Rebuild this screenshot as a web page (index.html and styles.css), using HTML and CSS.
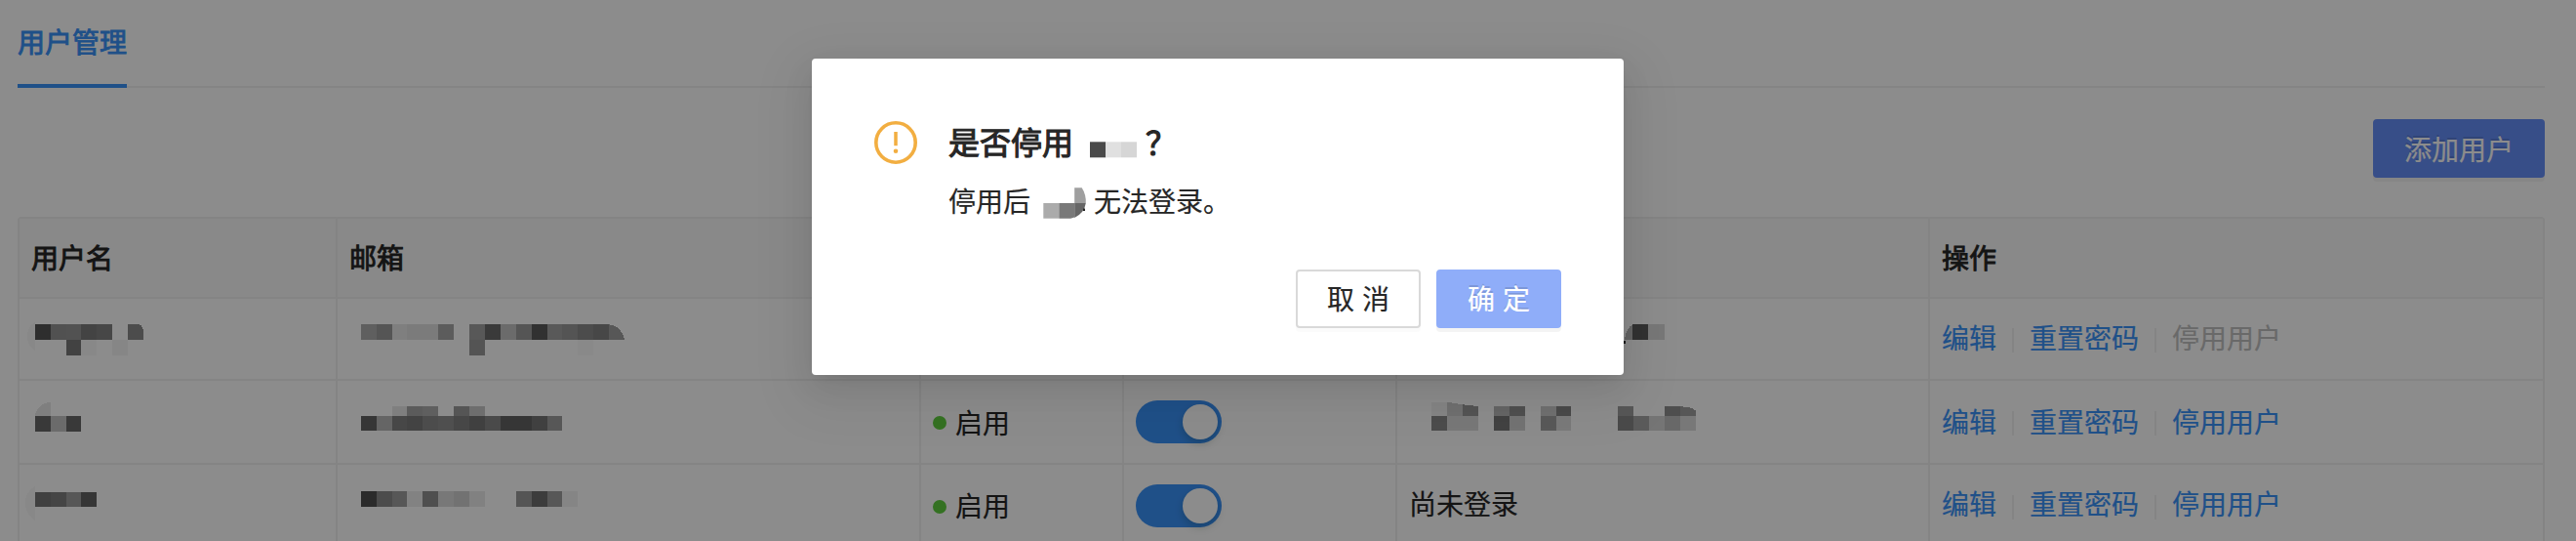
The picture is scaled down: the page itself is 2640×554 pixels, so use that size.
FILE: index.html
```
<!DOCTYPE html>
<html lang="zh-CN">
<head>
<meta charset="utf-8">
<title>用户管理</title>
<link rel="stylesheet" href="styles.css">
</head>
<body>
<main class="page">
  <nav class="tabs"><a class="tab">用户管理</a></nav>
  <div class="toolbar"><button class="btn btn-primary">添加用户</button></div>
  <section class="table">
    <div class="row head">
      <div class="cell">用户名</div><div class="cell">邮箱</div><div class="cell"></div><div class="cell"></div><div class="cell"></div><div class="cell">操作</div>
    </div>
    <div class="row first">
      <div class="cell mosaic"><svg viewBox="20 306 324 82" width="324" height="82">
        <path d="M35.7 330Q28 334 28 344.500Q28 354 35.700 359z" opacity=".03"/>
        <g transform="translate(35.7 332) scale(15.93 15.9)"><rect width="1" height="1" opacity=".67"/><rect x="1" width="1" height="1" opacity=".42"/><rect x="2" width="1" height="1" opacity=".41"/><rect x="3" width="1" height="1" opacity=".52"/><rect x="4" width="1" height="1" opacity=".49"/><path d="M6 0h.7Q7 .15 7 .6V1H6z" opacity=".46"/><rect x="2" y="1" width="1" height="1" opacity=".53"/><rect x="3" y="1" width="1" height="1" opacity=".03"/><rect x="5" y="1" width="1" height="1" opacity=".04"/></g></svg></div>
      <div class="cell mosaic"><svg viewBox="346 306 596 82" width="596" height="82">
        <g transform="translate(369.7 332.3) scale(15.9 15.7)"><rect width="1" height="1" opacity=".32"/><rect x="1" width="1" height="1" opacity=".39"/><rect x="2" width="1" height="1" opacity=".09"/><rect x="3" width="2" height="1" opacity=".12"/><rect x="5" width="1" height="1" opacity=".34"/><rect x="7" width="1" height="1" opacity=".37"/><rect x="8" width="1" height="1" opacity=".58"/><rect x="9" width="1" height="1" opacity=".23"/><rect x="10" width="1" height="1" opacity=".39"/><rect x="11" width="1" height="1" opacity=".65"/><rect x="12" width="1" height="1" opacity=".36"/><rect x="13" width="1" height="1" opacity=".4"/><rect x="14" width="1" height="1" opacity=".46"/><rect x="15" width="1" height="1" opacity=".49"/><path d="M16 0Q16.800 .1 17 1H16z" opacity=".38"/><rect x="7" y="1" width="1" height="1" opacity=".4"/><rect x="14" y="1" width="1" height="1" opacity=".02"/></g></svg></div>
      <div class="cell"></div><div class="cell"></div>
      <div class="cell mosaic"><svg viewBox="1432 306 544 82" width="544" height="82">
        <path d="M1673.300 332Q1666 337 1665 348H1673.300z" opacity=".28"/><rect x="1664" y="348.500" width="2" height="3.500" opacity=".8"/><rect x="1673.300" y="332.300" width="16" height="15.700" opacity=".64"/><rect x="1689.300" y="332.300" width="16.200" height="15.700" opacity=".15"/></svg></div>
      <div class="cell actions"><a>编辑</a><i></i><a>重置密码</a><i></i><a class="off">停用用户</a></div>
    </div>
    <div class="row">
      <div class="cell mosaic"><svg viewBox="20 390 324 84" width="324" height="84">
        <path d="M51.600 412Q39 413 35.700 426H51.600z" opacity=".09"/>
        <g transform="translate(35.700 426) scale(15.930 15.500)"><rect width="1" height="1" opacity=".59"/><rect x="1" width="1" height="1" opacity=".23"/><rect x="2" width="1" height="1" opacity=".59"/></g></svg></div>
      <div class="cell mosaic"><svg viewBox="346 390 596 84" width="596" height="84">
        <g transform="translate(369.7 425.7) scale(15.9 15.6)"><rect width="1" height="1" opacity=".61"/><rect x="1" width="1" height="1" opacity=".28"/><rect x="2" width="1" height="1" opacity=".49"/><rect x="3" width="1" height="1" opacity=".52"/><rect x="4" width="1" height="1" opacity=".46"/><rect x="5" width="1" height="1" opacity=".43"/><rect x="6" width="1" height="1" opacity=".49"/><rect x="7" width="1" height="1" opacity=".54"/><rect x="8" width="1" height="1" opacity=".47"/><rect x="9" width="2" height="1" opacity=".61"/><rect x="11" width="1" height="1" opacity=".54"/><rect x="12" width="1" height="1" opacity=".38"/><rect x="2" y="-.6" width="1" height=".6" opacity=".09"/><rect x="3" y="-.6" width="1" height=".6" opacity=".35"/><rect x="4" y="-.6" width="1" height=".6" opacity=".32"/><rect x="6" y="-.6" width="1" height=".6" opacity=".39"/><rect x="7" y="-.6" width="1" height=".6" opacity=".21"/></g></svg></div>
      <div class="cell"><span class="dot"></span>启用</div>
      <div class="cell"><span class="switch"><b></b></span></div>
      <div class="cell mosaic"><svg viewBox="1432 390 544 84" width="544" height="84">
        <g transform="translate(1467.3 425.7) scale(15.9 15.6)"><rect width="1" height="1" opacity=".46"/><rect x="1" width="2" height="1" opacity=".14"/><rect x="4" width="1" height="1" opacity=".53"/><rect x="5" width="1" height="1" opacity=".18"/><rect x="7" width="1" height="1" opacity=".36"/><rect x="8" width="1" height="1" opacity=".13"/><rect x="12" width="1" height="1" opacity=".47"/><rect x="13" width="1" height="1" opacity=".35"/><rect x="14" width="1" height="1" opacity=".16"/><rect x="15" width="1" height="1" opacity=".26"/><rect x="16" width="1" height="1" opacity=".14"/><rect y="-.9" width="1" height=".9" opacity=".05"/><path d="M1-.9L2-.73V0H1z" opacity=".2"/><path d="M2-.73L3-.62V0H2z" opacity=".4"/><rect x="4" y="-.64" width="1" height=".64" opacity=".28"/><rect x="5" y="-.64" width="1" height=".64" opacity=".43"/><rect x="7" y="-.64" width="1" height=".64" opacity=".2"/><rect x="8" y="-.64" width="1" height=".64" opacity=".47"/><rect x="12" y="-.64" width="1" height=".64" opacity=".38"/><rect x="15" y="-.6" width="1" height=".6" opacity=".44"/><path d="M16-.6Q16.700-.6 17-.35V0H16z" opacity=".38"/></g></svg></div>
      <div class="cell actions"><a>编辑</a><i></i><a>重置密码</a><i></i><a>停用用户</a></div>
    </div>
    <div class="row last">
      <div class="cell mosaic"><svg viewBox="20 476 324 84" width="324" height="84">
        <path d="M35.700 498Q26 504 26 515Q26 526 35.700 533z" opacity=".03"/>
        <g transform="translate(35.700 503.500) scale(15.930 15.700)"><rect width="1" height="1" opacity=".54"/><rect x="1" width="1" height="1" opacity=".5"/><rect x="2" width="1" height="1" opacity=".38"/><rect x="3" width="1" height="1" opacity=".61"/></g></svg></div>
      <div class="cell mosaic"><svg viewBox="346 476 596 84" width="596" height="84">
        <g transform="translate(369.7 503.3) scale(15.9 15.7)"><rect width="1" height="1" opacity=".69"/><rect x="1" width="1" height="1" opacity=".46"/><rect x="2" width="1" height="1" opacity=".38"/><rect x="3" width="1" height="1" opacity=".07"/><rect x="4" width="1" height="1" opacity=".43"/><rect x="5" width="1" height="1" opacity=".14"/><rect x="6" width="1" height="1" opacity=".19"/><rect x="7" width="1" height="1" opacity=".08"/><rect x="10" width="1" height="1" opacity=".39"/><rect x="11" width="1" height="1" opacity=".57"/><rect x="12" width="1" height="1" opacity=".38"/><rect x="13" width="1" height="1" opacity=".05"/></g></svg></div>
      <div class="cell"><span class="dot"></span><span class="state">启用</span></div>
      <div class="cell"><span class="switch"><b></b></span></div>
      <div class="cell login">尚未登录</div>
      <div class="cell actions"><a>编辑</a><i></i><a>重置密码</a><i></i><a>停用用户</a></div>
    </div>
  </section>
</main>
<div class="mask">
  <div class="modal" role="dialog">
    <div class="modal-body">
      <svg class="warn" viewBox="0 0 44 44" width="44" height="44"><circle cx="22" cy="22" r="20.200"/><path d="M20.250 11h3.500v14.200h-3.500z"/><circle class="solid" cx="22" cy="30.800" r="2.300"/></svg>
      <div>
        <h2 class="title"><span>是否停用</span><svg viewBox="1100 124 74 44" width="74" height="44"><rect x="1117" y="145.300" width="16.200" height="16" fill="#4a4a4a"/><rect x="1133.200" y="145.300" width="15.800" height="16" fill="#e0e0e0"/><rect x="1149" y="145.300" width="16" height="16" fill="#d6d6d6"/></svg><span>？</span></h2>
        <p class="text"><span>停用后</span><svg viewBox="1056 184 65 44" width="65" height="44"><rect x="1069.300" y="208" width="16" height="15.700" fill="#ababab"/><path d="M1085.300 208h15.900v14.500l-4 1.200h-11.900z" fill="#797979"/><path d="M1101.200 208h11.600q-1.500 10-11.600 15z" fill="#666"/><path d="M1101.200 192.300h7.500q4.500 7 4.100 15.700h-11.600z" fill="#9f9f9f"/><rect x="1110" y="213.500" width="2" height="2.500" fill="#262626"/></svg><span>无法登录。</span></p>
      </div>
    </div>
    <div class="modal-actions"><button class="btn spaced">取消</button><button class="btn btn-primary btn-soft spaced">确定</button></div>
  </div>
</div>
</body>
</html>
```
FILE: styles.css
```
* { box-sizing: border-box; }
body {
  margin: 0;
  height: 554px;
  overflow: hidden;
  background: #fff;
  color: #262626;
  font: 28px/44px "Noto Sans CJK SC", sans-serif;
  -webkit-text-stroke: .2px currentColor;
}
.page { height: 554px; overflow: hidden; padding: 0 32px 0 18px; }
.tabs { display: flex; height: 90px; border-bottom: 2px solid #f0f0f0; }
.tab {
  height: 90px;
  padding-top: 20px;
  border-bottom: 4px solid #3a92f8;
  color: #3a92f8;
  -webkit-text-stroke-width: .9px;
}
.toolbar { display: flex; justify-content: flex-end; padding: 32px 0 40px; }
.btn {
  height: 60px;
  padding: 0 30px;
  border: 2px solid #d9d9d9;
  border-radius: 4px;
  background: #fff;
  color: #262626;
  font: inherit;
  line-height: 54px;
  box-shadow: 0 4px 0 rgba(0, 0, 0, .016);
}
.btn-primary {
  border-color: #658ef8;
  background: #658ef8;
  color: #fff;
  text-shadow: 0 -2px 0 rgba(0, 0, 0, .12);
  box-shadow: 0 4px 0 rgba(0, 0, 0, .045);
}
.btn-soft { border-color: #8fadf9; background: #8fadf9; }
.spaced { width: 128px; padding-bottom: 2px; letter-spacing: 8px; white-space: nowrap; }
.table { border: 2px solid #f0f0f0; border-bottom: 0; border-radius: 4px 4px 0 0; }
.row {
  display: grid;
  grid-template-columns: 326px 598px 208px 280px 546px 1fr;
  height: 86px;
  border-bottom: 2px solid #f0f0f0;
}
.head { height: 82px; background: #fafafa; -webkit-text-stroke-width: .9px; }
.first { height: 84px; }
.cell { display: flex; align-items: center; padding-left: 12px; border-right: 2px solid #f0f0f0; }
.cell:last-child { border-right: 0; }
.head .cell { padding-bottom: 2px; }
.mosaic { padding: 0; }
.mosaic svg { display: block; flex: none; shape-rendering: crispEdges; }
.dot { width: 14px; height: 14px; margin: 2px 9px 0 0; border-radius: 50%; background: #5fce3e; }
.state { margin-bottom: 2px; }
.login { padding-bottom: 6px; }
.switch {
  display: flex;
  justify-content: flex-end;
  width: 88px;
  height: 44px;
  padding: 4px;
  border-radius: 22px;
  background: #3a92f8;
}
.switch b {
  width: 36px;
  height: 36px;
  border-radius: 50%;
  background: #fff;
  box-shadow: 0 4px 8px rgba(0, 35, 11, .2);
}
.actions { gap: 16px; color: #3a92f8; }
.actions a { margin-bottom: 2px; }
.first a { margin-bottom: 4px; }
.last a { margin-bottom: 6px; }
.actions i { width: 2px; height: 25px; margin-top: 2px; background: #f0f0f0; }
.actions .off { color: #bfbfbf; }
.mask { position: absolute; inset: 0; padding-top: 60px; background: rgba(0, 0, 0, .45); }
.modal {
  width: 832px;
  height: 324px;
  margin-left: 832px;
  padding: 64px 64px 48px;
  border-radius: 4px;
  background: #fff;
  box-shadow: 0 6px 12px -8px rgba(0, 0, 0, .12), 0 12px 32px rgba(0, 0, 0, .08), 0 18px 56px 16px rgba(0, 0, 0, .05);
}
.modal-body { display: flex; gap: 32px; }
.warn { flex: none; fill: #f2ae41; }
.warn circle { fill: none; stroke: #f2ae41; stroke-width: 3.6; }
.warn .solid { fill: #f2ae41; stroke: none; }
.title {
  display: flex;
  height: 44px;
  margin: 0 0 16px;
  font-size: 32px;
  font-weight: 400;
  line-height: 40px;
  -webkit-text-stroke-width: 1.1px;
}
.text { display: flex; height: 44px; margin: 0; line-height: 42px; }
.modal-actions { display: flex; justify-content: flex-end; gap: 16px; margin-top: 48px; }
```
